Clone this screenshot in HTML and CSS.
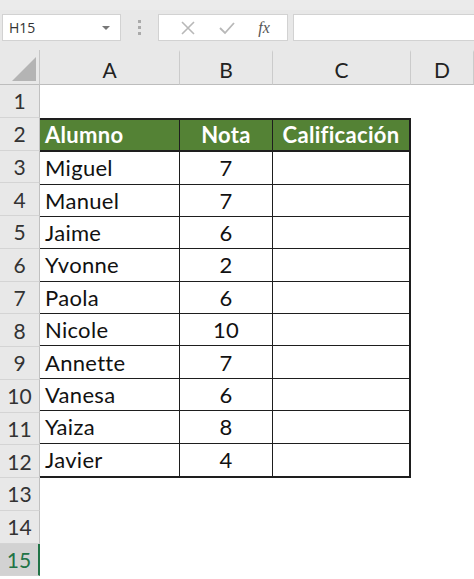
FILE: index.html
```html
<!DOCTYPE html>
<html lang="es">

<head>
  <meta charset="UTF-8">
  <meta name="viewport" content="width=device-width, initial-scale=1.0">
  <title>Calificaciones</title>
  <link rel="stylesheet" href="styles.css">
</head>

<body>
  <header class="toolbar">
    <div class="name-box">
      <span>H15</span>
      <span class="caret"></span>
    </div>
    <div class="grip">
      <span></span><span></span><span></span>
    </div>
    <div class="buttons">
      <svg class="icon" width="16" height="16" viewBox="0 0 16 16">
        <path d="M2 2 L14 14 M14 2 L2 14" stroke="#b8b8b8" stroke-width="1.6" fill="none" />
      </svg>
      <svg class="icon" width="18" height="16" viewBox="0 0 18 16">
        <path d="M2 8 L7 13 L16 3" stroke="#b8b8b8" stroke-width="1.8" fill="none" />
      </svg>
      <span class="fx">fx</span>
    </div>
    <div class="formula"></div>
  </header>

  <main class="sheet">
    <div class="corner"><span class="triangle"></span></div>
    <div class="col-head">A</div>
    <div class="col-head">B</div>
    <div class="col-head">C</div>
    <div class="col-head">D</div>

    <div class="row-head" style="grid-row: 2">1</div>
    <div class="row-head" style="grid-row: 3">2</div>
    <div class="row-head" style="grid-row: 4">3</div>
    <div class="row-head" style="grid-row: 5">4</div>
    <div class="row-head" style="grid-row: 6">5</div>
    <div class="row-head" style="grid-row: 7">6</div>
    <div class="row-head" style="grid-row: 8">7</div>
    <div class="row-head" style="grid-row: 9">8</div>
    <div class="row-head" style="grid-row: 10">9</div>
    <div class="row-head" style="grid-row: 11">10</div>
    <div class="row-head" style="grid-row: 12">11</div>
    <div class="row-head" style="grid-row: 13">12</div>
    <div class="row-head" style="grid-row: 14">13</div>
    <div class="row-head" style="grid-row: 15">14</div>
    <div class="row-head selected" style="grid-row: 16">15</div>

    <div class="data">
      <div class="th">Alumno</div>
      <div class="th center">Nota</div>
      <div class="th center">Calificación</div>

      <div class="td">Miguel</div><div class="td center">7</div><div class="td"></div>
      <div class="td">Manuel</div><div class="td center">7</div><div class="td"></div>
      <div class="td">Jaime</div><div class="td center">6</div><div class="td"></div>
      <div class="td">Yvonne</div><div class="td center">2</div><div class="td"></div>
      <div class="td">Paola</div><div class="td center">6</div><div class="td"></div>
      <div class="td">Nicole</div><div class="td center">10</div><div class="td"></div>
      <div class="td">Annette</div><div class="td center">7</div><div class="td"></div>
      <div class="td">Vanesa</div><div class="td center">6</div><div class="td"></div>
      <div class="td">Yaiza</div><div class="td center">8</div><div class="td"></div>
      <div class="td last">Javier</div><div class="td center last">4</div><div class="td last"></div>
    </div>
  </main>
</body>

</html>
```

FILE: styles.css
```css
* {
  margin: 0;
  padding: 0;
  box-sizing: border-box;
}

body {
  width: 474px;
  height: 579px;
  overflow: hidden;
  background-color: #fff;
  font-family: Lato, "Open Sans", sans-serif;
  color: #111;
}

.toolbar {
  display: flex;
  align-items: flex-start;
  height: 50px;
  padding: 4px 0 0 2px;
  background-color: #e8e8e8;
  border-top: 10px solid #ebebeb;
}

.name-box {
  display: flex;
  align-items: center;
  justify-content: space-between;
  width: 119px;
  height: 27px;
  padding: 0 10px 0 6px;
  background-color: #fff;
  border: 1px solid #d2d2d2;
  font-family: "Open Sans", sans-serif;
  font-size: 14px;
  color: #333;
}

.caret {
  width: 0;
  height: 0;
  border-left: 4px solid transparent;
  border-right: 4px solid transparent;
  border-top: 4px solid #777;
}

.grip {
  display: flex;
  flex-direction: column;
  align-items: center;
  justify-content: center;
  gap: 3px;
  width: 37px;
  height: 27px;
}

.grip span {
  display: block;
  width: 3px;
  height: 3px;
  background-color: #aaa;
}

.buttons {
  display: flex;
  align-items: center;
  justify-content: space-around;
  width: 130px;
  height: 27px;
  padding: 0 6px 0 10px;
  background-color: #fff;
  border: 1px solid #d2d2d2;
}

.fx {
  font-family: "Liberation Serif", serif;
  font-style: italic;
  font-size: 16px;
  color: #555;
}

.formula {
  flex: 1;
  height: 27px;
  margin-left: 5px;
  background-color: #fff;
  border: 1px solid #d2d2d2;
  border-right: none;
}

.sheet {
  display: grid;
  grid-template-columns: 40px 140px 93px 138px 63px;
  grid-template-rows: 35px;
  grid-auto-rows: 32.75px;
}

.corner {
  position: relative;
  grid-row: 1;
  background-color: #e8e8e8;
  border-right: 1px solid #c6c6c6;
  border-bottom: 1px solid #bdbdbd;
}

.triangle {
  position: absolute;
  right: 3px;
  bottom: 3px;
  width: 0;
  height: 0;
  border-left: 24px solid transparent;
  border-bottom: 24px solid #b4b4b4;
}

.col-head {
  grid-row: 1;
  display: flex;
  align-items: center;
  justify-content: center;
  padding-top: 3px;
  background-color: #e8e8e8;
  border-bottom: 1px solid #bdbdbd;
  border-right: 1px solid #cbcbcb;
  border-top: 2px solid #e8e8e8;
  font-size: 21px;
  color: #222;
}

.row-head {
  grid-column: 1;
  display: flex;
  align-items: center;
  justify-content: center;
  background-color: #e8e8e8;
  border-right: 1px solid #c0c0c0;
  border-bottom: 1px solid #d4d4d4;
  font-size: 21px;
  color: #333;
}

.row-head.selected {
  background-color: #d2d2d2;
  color: #217346;
  border-right: 2px solid #217346;
}

.data {
  grid-column: 2 / 5;
  grid-row: 3 / 14;
  display: grid;
  grid-template-columns: 140px 93px 1fr;
  grid-template-rows: repeat(11, 1fr);
  border-top: 2px solid #1e1e1e;
  border-right: 2px solid #1e1e1e;
  border-bottom: 2px solid #1e1e1e;
}

.th,
.td {
  display: flex;
  align-items: center;
  padding: 0 5px;
  border-right: 1px solid #1e1e1e;
  border-bottom: 1px solid #1e1e1e;
  font-size: 22px;
  letter-spacing: 0.3px;
}

.th:nth-child(3n),
.td:nth-child(3n) {
  border-right: none;
}

.th {
  background-color: #548235;
  color: #fff;
  font-weight: 700;
  border-bottom-width: 2px;
}

.td.last {
  border-bottom: none;
}

.center {
  justify-content: center;
}
```
